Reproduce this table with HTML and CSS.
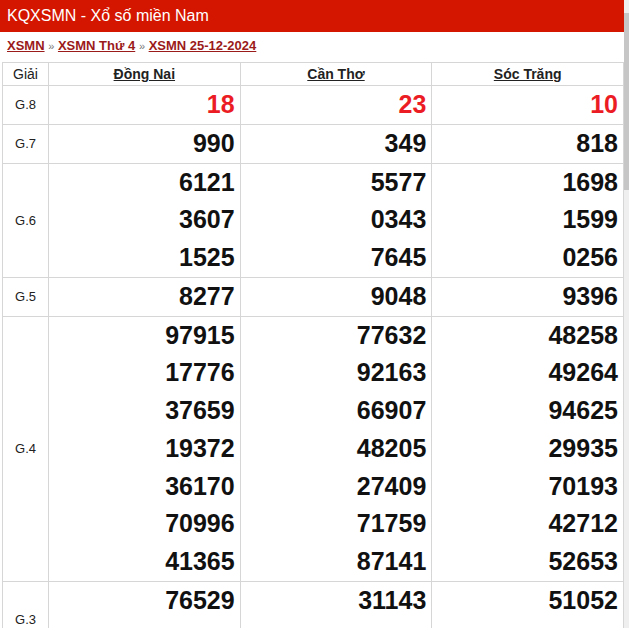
FILE: index.html
```html
<!DOCTYPE html>
<html lang="vi">
<head>
<meta charset="utf-8">
<title>KQXSMN - Xổ số miền Nam</title>
<link rel="stylesheet" href="styles.css">
</head>
<body>
<div class="frame">
  <div class="page">
    <h1 class="title">KQXSMN - Xổ số miền Nam</h1>
    <div class="crumbs">
      <a href="#">XSMN</a> <span class="sep">»</span> <a href="#">XSMN Thứ 4</a> <span class="sep">»</span> <a href="#">XSMN 25-12-2024</a>
    </div>
    <table class="results">
      <colgroup>
        <col class="c-prize">
        <col class="c-prov">
        <col class="c-prov">
        <col class="c-prov">
      </colgroup>
      <thead>
        <tr>
          <th class="prize-h">Giải</th>
          <th><a href="#">Đồng Nai</a></th>
          <th><a href="#">Cần Thơ</a></th>
          <th><a href="#">Sóc Trăng</a></th>
        </tr>
      </thead>
      <tbody>
        <tr>
          <td class="prize">G.8</td>
          <td><div class="num red">18</div></td>
          <td><div class="num red">23</div></td>
          <td><div class="num red">10</div></td>
        </tr>
        <tr>
          <td class="prize">G.7</td>
          <td><div class="num">990</div></td>
          <td><div class="num">349</div></td>
          <td><div class="num">818</div></td>
        </tr>
        <tr>
          <td class="prize">G.6</td>
          <td><div class="num">6121</div><div class="num">3607</div><div class="num">1525</div></td>
          <td><div class="num">5577</div><div class="num">0343</div><div class="num">7645</div></td>
          <td><div class="num">1698</div><div class="num">1599</div><div class="num">0256</div></td>
        </tr>
        <tr>
          <td class="prize">G.5</td>
          <td><div class="num">8277</div></td>
          <td><div class="num">9048</div></td>
          <td><div class="num">9396</div></td>
        </tr>
        <tr>
          <td class="prize">G.4</td>
          <td><div class="num">97915</div><div class="num">17776</div><div class="num">37659</div><div class="num">19372</div><div class="num">36170</div><div class="num">70996</div><div class="num">41365</div></td>
          <td><div class="num">77632</div><div class="num">92163</div><div class="num">66907</div><div class="num">48205</div><div class="num">27409</div><div class="num">71759</div><div class="num">87141</div></td>
          <td><div class="num">48258</div><div class="num">49264</div><div class="num">94625</div><div class="num">29935</div><div class="num">70193</div><div class="num">42712</div><div class="num">52653</div></td>
        </tr>
        <tr class="g3">
          <td class="prize">G.3</td>
          <td><div class="num">76529</div></td>
          <td><div class="num">31143</div></td>
          <td><div class="num">51052</div></td>
        </tr>
      </tbody>
    </table>
  </div>
  <div class="scrollbar"><div class="thumb"></div></div>
</div>
</body>
</html>
```

FILE: styles.css
```css
html, body {
  margin: 0;
  padding: 0;
  background: #fff;
}

body {
  font-family: "Liberation Sans", Arial, sans-serif;
  color: #222;
}

.frame {
  display: flex;
  width: 629px;
  height: 628px;
  overflow: hidden;
}

.page {
  width: 624px;
  height: 628px;
  overflow: hidden;
  flex: none;
}

.scrollbar {
  width: 5px;
  height: 628px;
  background: #efefef;
  flex: none;
  padding-top: 13px;
  box-sizing: border-box;
}

.thumb {
  height: 177px;
  background: #c6c6c6;
}

.title {
  margin: 0;
  height: 32px;
  line-height: 32px;
  padding-left: 7px;
  background: #d41600;
  color: #fff;
  font-size: 16px;
  font-weight: normal;
}

.crumbs {
  padding: 4px 7px 6px;
  line-height: 19px;
  font-size: 13px;
  color: #777;
}

.crumbs a {
  color: #9b1a1a;
  font-weight: bold;
  text-decoration: underline;
}

.crumbs .sep {
  font-size: 11px;
  color: #777;
}

.results {
  margin-left: 2px;
  width: 622px;
  border-collapse: collapse;
  table-layout: fixed;
}

.c-prize {
  width: 46px;
}

.results th,
.results td {
  border: 1px solid #d6d6d6;
  padding: 0;
  vertical-align: top;
}

.results th {
  height: 22px;
  line-height: 22px;
  font-size: 14px;
  font-weight: bold;
  text-align: center;
  vertical-align: middle;
}

.results th a {
  color: #222;
  text-decoration: underline;
}

.results th.prize-h {
  font-weight: normal;
  font-size: 14px;
}

.results td.prize {
  text-align: center;
  vertical-align: middle;
  font-size: 13px;
  color: #222;
}

.results tr.g3 td {
  height: 75.5px;
}

.num {
  height: 37.77px;
  line-height: 37.77px;
  text-align: right;
  padding-right: 5px;
  font-size: 25px;
  font-weight: bold;
  color: #111;
}

.num.red {
  color: #ec1c24;
}
```
